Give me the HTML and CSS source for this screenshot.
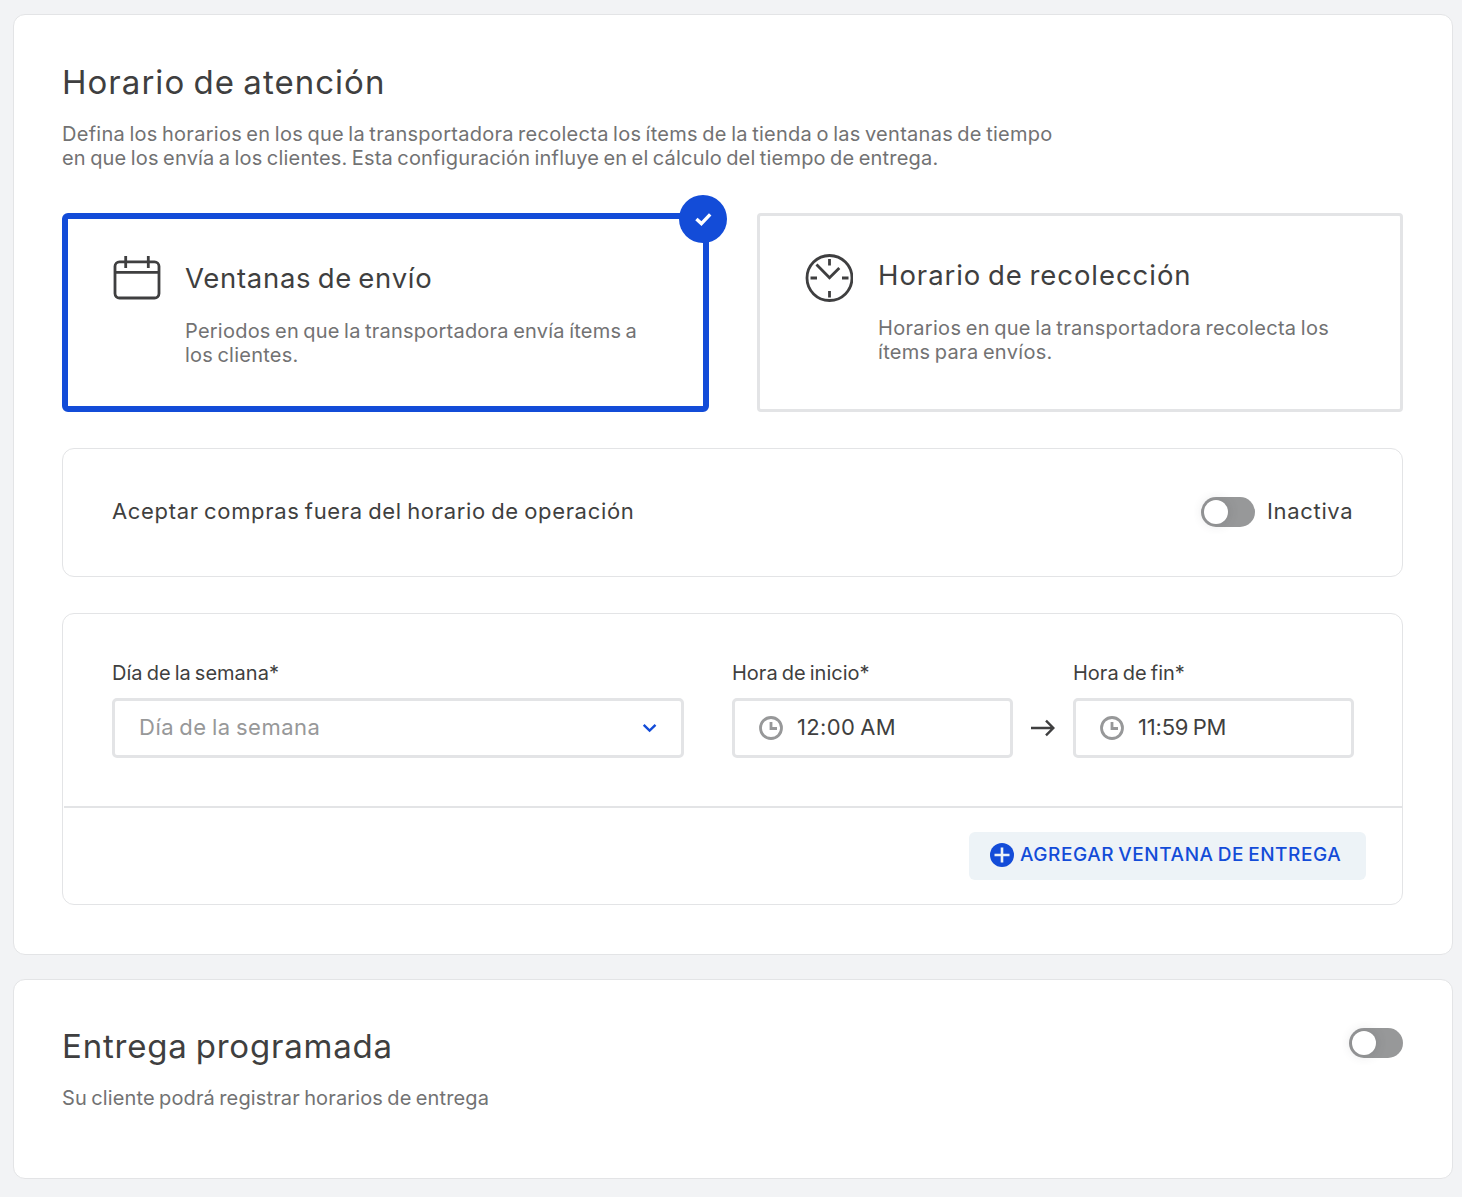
FILE: index.html
```html
<!DOCTYPE html>
<html lang="es">
<head>
<meta charset="utf-8">
<title>Horario de atención</title>
<link rel="stylesheet" href="styles.css">
</head>
<body>
<main class="page">
  <section class="panel panel-hours">
    <h1 class="title title-hours">Horario de atención</h1>
    <p class="lead"><span class="lead-a">Defina los horarios en los que la transportadora recolecta los ítems de la tienda o las ventanas de tiempo</span><br><span class="lead-b">en que los envía a los clientes. Esta configuración influye en el cálculo del tiempo de entrega.</span></p>

    <div class="choices">
      <div class="choice choice-selected">
        <svg class="choice-icon" viewBox="0 0 48 52" fill="none" stroke="#3f3f40" stroke-width="2.8">
          <rect x="2" y="6.800" width="44" height="36.200" rx="4.500"/>
          <path d="M2 17.300h44M12.700 1v12M35.300 1v12"/>
        </svg>
        <div class="choice-text">
          <h2 class="choice-title">Ventanas de envío</h2>
          <p class="choice-desc">Periodos en que la transportadora envía ítems a<br>los clientes.</p>
        </div>
        <span class="badge">
          <svg width="20" height="16" viewBox="0 0 20 16" fill="none" stroke="#fff" stroke-width="3.4"><path d="M3.400 8l5 4.600 8.800-9.200"/></svg>
        </span>
      </div>
      <div class="choice choice-pickup">
        <svg class="choice-icon" viewBox="0 0 48 52" fill="none" stroke="#3f3f40" stroke-width="2.8">
          <circle cx="24.500" cy="26" r="22.500"/>
          <path d="M24.500 7v6.500M24.500 39v6.500M5.500 26h6.500M37 26h6.500"/>
          <path d="M11.500 12.500l13 13.300 9.800-9.800"/>
        </svg>
        <div class="choice-text">
          <h2 class="choice-title">Horario de recolección</h2>
          <p class="choice-desc">Horarios en que la transportadora recolecta los<br>ítems para envíos.</p>
        </div>
      </div>
    </div>

    <div class="box accept">
      <span class="accept-label">Aceptar compras fuera del horario de operación</span>
      <span class="toggle"></span>
      <span class="toggle-label">Inactiva</span>
    </div>

    <div class="box schedule">
      <div class="fields">
        <div class="field field-day">
          <label class="label">Día de la semana*</label>
          <div class="control control-select">
            <span class="placeholder">Día de la semana</span>
            <svg class="chevron" width="16" height="12" viewBox="0 0 16 12" fill="none" stroke="#134cd8" stroke-width="2.400"><path d="M2.700 2.800l5.900 5.800 5.900-5.800"/></svg>
          </div>
        </div>
        <div class="field field-time">
          <label class="label">Hora de inicio*</label>
          <div class="control">
            <svg width="24" height="24" viewBox="0 0 24 24" fill="none" stroke="#979899" stroke-width="2.800"><circle cx="12" cy="12" r="10.500"/><path d="M12 6v6.500h6"/></svg>
            <span class="value value-start">12:00 AM</span>
          </div>
        </div>
        <svg class="arrow" width="24" height="18" viewBox="0 0 24 18" fill="none" stroke="#3f3f40" stroke-width="2.400"><path d="M0 9h22M15 1.700l7.300 7.300-7.300 7.300"/></svg>
        <div class="field field-time">
          <label class="label">Hora de fin*</label>
          <div class="control">
            <svg width="24" height="24" viewBox="0 0 24 24" fill="none" stroke="#979899" stroke-width="2.800"><circle cx="12" cy="12" r="10.500"/><path d="M12 6v6.500h6"/></svg>
            <span class="value value-end">11:59 PM</span>
          </div>
        </div>
      </div>
      <div class="actions">
        <button class="add" type="button">
          <svg width="24" height="24" viewBox="0 0 24 24"><circle cx="12" cy="12" r="12" fill="#134cd8"/><path d="M12 4.500v15M4.500 12h15" stroke="#edf3f7" stroke-width="2.600"/></svg>
          <span class="add-label">AGREGAR VENTANA DE ENTREGA</span>
        </button>
      </div>
    </div>
  </section>

  <section class="panel panel-scheduled">
    <div>
      <h1 class="title title-scheduled">Entrega programada</h1>
      <p class="lead lead-c">Su cliente podrá registrar horarios de entrega</p>
    </div>
    <span class="toggle"></span>
  </section>
</main>
</body>
</html>
```
FILE: styles.css
```css
* { box-sizing: border-box; }
body {
  margin: 0;
  background: #f2f3f5;
  color: #3f3f40;
  font-family: Inter, "Noto Sans", sans-serif;
  word-spacing: -1.5px;
}
h1, h2, p { margin: 0; font-weight: 400; }
.page {
  display: flex;
  flex-direction: column;
  gap: 24px;
  width: 1462px;
  padding: 14px 9px 18px 13px;
}
.panel {
  background: #fff;
  border: 1px solid #e3e4e6;
  border-radius: 12px;
}
.panel-hours { height: 941px; padding: 46px 49px 49px 48px; }
.title {
  font-size: 33px;
  line-height: 42px;
  word-spacing: -2px;
  white-space: nowrap;
}
.title-hours { letter-spacing: 1.03px; }
.title-scheduled { letter-spacing: .8px; }
.lead {
  margin-top: 19px;
  color: #727273;
  font-size: 20px;
  line-height: 24px;
  white-space: nowrap;
}
.lead-a { letter-spacing: .27px; }
.lead-b { letter-spacing: .19px; }
.lead-c { letter-spacing: .14px; }
.choices {
  display: grid;
  grid-template-columns: 647px 646px;
  gap: 48px;
  margin-top: 43px;
}
.choice {
  position: relative;
  display: flex;
  gap: 24px;
  height: 199px;
  padding: 36px 45px;
  border: 3px solid #e3e4e6;
  border-radius: 4px;
}
.choice-selected { border: 6px solid #134cd8; border-radius: 6px; }
.choice-icon { flex: none; width: 48px; height: 52px; }
.choice-text { padding-top: 6px; white-space: nowrap; }
.choice-title {
  font-size: 27.5px;
  line-height: 34px;
  letter-spacing: .7px;
  word-spacing: -2px;
}
.choice-desc {
  margin-top: 24px;
  color: #727273;
  font-size: 20px;
  line-height: 24px;
  letter-spacing: .23px;
}
.choice-pickup { gap: 25px; }
.choice-pickup .choice-title { letter-spacing: .95px; }
.choice-pickup .choice-desc { letter-spacing: .3px; }
.badge {
  position: absolute;
  top: -24px;
  right: -24px;
  display: flex;
  align-items: center;
  justify-content: center;
  width: 48px;
  height: 48px;
  border-radius: 50%;
  background: #134cd8;
}
.box { margin-top: 36px; border: 1px solid #e3e4e6; border-radius: 12px; }
.accept {
  display: flex;
  align-items: center;
  height: 129px;
  padding: 0 48px 2px 49px;
  font-size: 22px;
  letter-spacing: .67px;
  white-space: nowrap;
}
.accept-label { margin-right: auto; padding-bottom: 2px; }
.toggle {
  flex: none;
  width: 54px;
  height: 30px;
  padding: 3px;
  border-radius: 15px;
  background: #979899;
}
.toggle::before {
  content: "";
  display: block;
  width: 24px;
  height: 24px;
  border-radius: 50%;
  background: #fff;
  box-shadow: 0 0 12px rgba(61, 62, 64, .2);
}
.toggle-label { width: 87px; margin-left: 12px; padding-bottom: 2px; }
.schedule { height: 292px; }
.fields { display: flex; align-items: flex-end; padding: 47px 48px 48px 49px; }
.field-day { width: 572px; margin-right: 48px; }
.field-time { width: 281px; }
.label {
  display: block;
  margin-bottom: 13px;
  font-size: 20px;
  line-height: 24px;
  white-space: nowrap;
}
.control {
  display: flex;
  align-items: center;
  height: 60px;
  padding: 0 24px;
  border: 3px solid #e3e4e6;
  border-radius: 5px;
  font-size: 22px;
  white-space: nowrap;
}
.control-select { justify-content: space-between; }
.placeholder { padding-bottom: 2px; color: #979899; letter-spacing: .53px; }
.value { margin-left: 14px; padding-bottom: 2px; }
.value-start { letter-spacing: .35px; }
.value-end { letter-spacing: -.2px; }
.arrow { margin: 0 18px 21px; }
.actions {
  display: flex;
  justify-content: flex-end;
  margin-left: 1px;
  padding: 24px 36px;
  border-top: 2px solid #e3e4e6;
}
.add {
  display: flex;
  align-items: center;
  gap: 6px;
  width: 397px;
  height: 48px;
  padding: 0 0 2px 21px;
  border: 0;
  border-radius: 6px;
  background: #edf3f7;
  color: #134cd8;
  font: 500 19px Inter, "Noto Sans", sans-serif;
  white-space: nowrap;
}
.add-label { padding-bottom: 2px; letter-spacing: .56px; word-spacing: -1.5px; }
.panel-scheduled {
  display: flex;
  justify-content: space-between;
  height: 200px;
  padding: 45px 49px 0 48px;
}
.panel-scheduled .toggle { margin-top: 3px; }
```
